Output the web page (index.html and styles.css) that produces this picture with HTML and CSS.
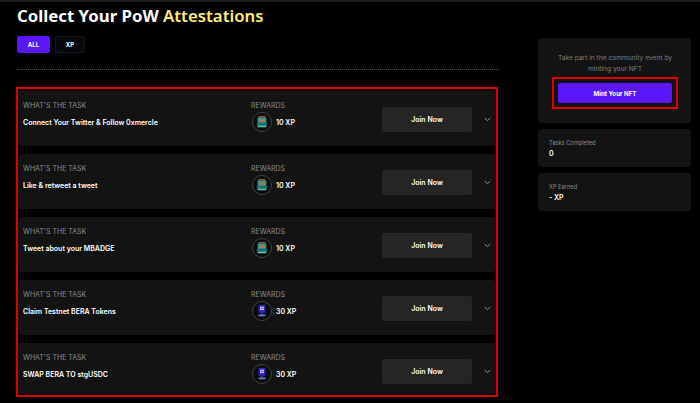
FILE: index.html
```html
<!DOCTYPE html>
<html lang="en">
<head>
    <meta charset="UTF-8">
    <meta name="viewport" content="width=device-width, initial-scale=1.0">
    <title>Collect Your PoW Attestations</title>
    <link rel="stylesheet" href="styles.css">
</head>
<body>
    <svg class="icon-defs" width="0" height="0">
        <defs>
            <symbol id="badge-green" viewBox="0 0 16 16">
                <rect x="4" y="1" width="8" height="2" fill="#8a5a44"/>
                <rect x="3" y="3" width="10" height="6" fill="#2b9c98"/>
                <rect x="5" y="5" width="6" height="3" fill="#c0703f"/>
                <rect x="2" y="9" width="12" height="3" fill="#1d6d74"/>
                <rect x="3" y="12" width="10" height="2" fill="#58c8b4"/>
            </symbol>
            <symbol id="badge-blue" viewBox="0 0 16 16">
                <rect x="4" y="1" width="8" height="9" fill="#2226c4"/>
                <rect x="6" y="3" width="4" height="4" fill="#d8d8f0"/>
                <rect x="7" y="4" width="2" height="2" fill="#d83a5a"/>
                <rect x="7" y="10" width="2" height="2" fill="#3438d0"/>
                <rect x="4" y="12" width="8" height="2" fill="#6f7ad8"/>
            </symbol>
            <symbol id="chevron" viewBox="0 0 10 6">
                <path d="M1 1l4 3.5L9 1" fill="none" stroke="#a8a8a8" stroke-width="1.2"/>
            </symbol>
        </defs>
    </svg>

    <div class="page">
        <div class="left">
            <h1>Collect Your PoW <span class="accent">Attestations</span></h1>

            <div class="tabs">
                <button class="tab tab-active">ALL</button>
                <button class="tab">XP</button>
            </div>

            <div class="divider"></div>

            <!-- Task list -->
            <div class="tasks">
                <div class="task">
                    <div class="task-info">
                        <div class="label">WHAT'S THE TASK</div>
                        <div class="task-name">Connect Your Twitter &amp; Follow 0xmercle</div>
                    </div>
                    <div class="task-reward">
                        <div class="label">REWARDS</div>
                        <div class="reward-row">
                            <span class="badge"><svg width="14" height="14"><use href="#badge-green"/></svg></span>
                            <span class="xp">10 XP</span>
                        </div>
                    </div>
                    <button class="join-btn">Join Now</button>
                    <svg class="chevron" width="7" height="5"><use href="#chevron"/></svg>
                </div>
                <div class="task">
                    <div class="task-info">
                        <div class="label">WHAT'S THE TASK</div>
                        <div class="task-name">Like &amp; retweet a tweet</div>
                    </div>
                    <div class="task-reward">
                        <div class="label">REWARDS</div>
                        <div class="reward-row">
                            <span class="badge"><svg width="14" height="14"><use href="#badge-green"/></svg></span>
                            <span class="xp">10 XP</span>
                        </div>
                    </div>
                    <button class="join-btn">Join Now</button>
                    <svg class="chevron" width="7" height="5"><use href="#chevron"/></svg>
                </div>
                <div class="task">
                    <div class="task-info">
                        <div class="label">WHAT'S THE TASK</div>
                        <div class="task-name">Tweet about your MBADGE</div>
                    </div>
                    <div class="task-reward">
                        <div class="label">REWARDS</div>
                        <div class="reward-row">
                            <span class="badge"><svg width="14" height="14"><use href="#badge-green"/></svg></span>
                            <span class="xp">10 XP</span>
                        </div>
                    </div>
                    <button class="join-btn">Join Now</button>
                    <svg class="chevron" width="7" height="5"><use href="#chevron"/></svg>
                </div>
                <div class="task">
                    <div class="task-info">
                        <div class="label">WHAT'S THE TASK</div>
                        <div class="task-name">Claim Testnet BERA Tokens</div>
                    </div>
                    <div class="task-reward">
                        <div class="label">REWARDS</div>
                        <div class="reward-row">
                            <span class="badge"><svg width="14" height="14"><use href="#badge-blue"/></svg></span>
                            <span class="xp">30 XP</span>
                        </div>
                    </div>
                    <button class="join-btn">Join Now</button>
                    <svg class="chevron" width="7" height="5"><use href="#chevron"/></svg>
                </div>
                <div class="task">
                    <div class="task-info">
                        <div class="label">WHAT'S THE TASK</div>
                        <div class="task-name">SWAP BERA TO stgUSDC</div>
                    </div>
                    <div class="task-reward">
                        <div class="label">REWARDS</div>
                        <div class="reward-row">
                            <span class="badge"><svg width="14" height="14"><use href="#badge-blue"/></svg></span>
                            <span class="xp">30 XP</span>
                        </div>
                    </div>
                    <button class="join-btn">Join Now</button>
                    <svg class="chevron" width="7" height="5"><use href="#chevron"/></svg>
                </div>
            </div>
        </div>

        <!-- Sidebar -->
        <div class="side">
            <div class="card mint-card">
                <p>Take part in the community event by minting your NFT</p>
                <div class="mint-outline">
                    <button class="mint-btn">Mint Your NFT</button>
                </div>
            </div>
            <div class="card stat-card">
                <div class="stat-label">Tasks Completed</div>
                <div class="stat-value">0</div>
            </div>
            <div class="card stat-card">
                <div class="stat-label">XP Earned</div>
                <div class="stat-value">- XP</div>
            </div>
        </div>
    </div>
</body>
</html>
```

FILE: styles.css
```css
* {
    margin: 0;
    padding: 0;
    box-sizing: border-box;
}

html, body {
    height: 403px;
    overflow: hidden;
}

body {
    font-family: "Noto Sans", Arial, sans-serif;
    background-color: #000;
    color: #fff;
    border-top: 2px solid #1c1c1c;
}

.icon-defs {
    display: block;
    height: 0;
}

.page {
    display: flex;
    padding-left: 16px;
}

.left {
    width: 483px;
}

h1 {
    font-size: 16.8px;
    line-height: 28px;
    font-weight: 700;
    margin-left: 1px;
}

.accent {
    color: #fdeb7f;
    font-weight: 600;
}

.tabs {
    display: flex;
    gap: 5px;
    margin: 6px 0 0 1px;
}

.tab {
    height: 17px;
    width: 30px;
    font-family: Inter, Arial, sans-serif;
    font-size: 6px;
    font-weight: 700;
    color: #fff;
    background: #07070c;
    border: 1px solid #17171c;
    border-radius: 2px;
}

.tab-active {
    width: 33px;
    background: #5b16fb;
    border-color: #5b16fb;
}

.divider {
    border-top: 1px dotted #4a4a4a;
    margin: 16px 0 0 1px;
}

.tasks {
    display: flex;
    flex-direction: column;
    gap: 8px;
    margin-top: 17px;
    width: 482px;
    height: 310px;
    border: 2px solid #e00000;
    padding-top: 2px;
}

.task {
    display: flex;
    align-items: flex-start;
    flex: none;
    height: 55px;
    padding-left: 5px;
    background: #131313;
    border-radius: 3px;
}

.task:last-child {
    height: 51px;
}

.task-info {
    width: 228px;
    padding-top: 10px;
}

.task-reward {
    width: 131px;
    padding-top: 10px;
}

.label {
    font-family: Inter, Arial, sans-serif;
    font-size: 7px;
    line-height: 10px;
    color: #8a8a8a;
}

.task-name {
    font-family: Inter, Arial, sans-serif;
    font-size: 7px;
    font-weight: 600;
    line-height: 10px;
    margin-top: 7px;
}

.reward-row {
    display: flex;
    align-items: center;
    gap: 4px;
    margin-top: 1px;
    margin-left: 1px;
}

.badge {
    display: flex;
    align-items: center;
    justify-content: center;
    width: 20px;
    height: 20px;
    border: 1px solid #444;
    border-radius: 50%;
    background: #0c0c0c;
}

.xp {
    font-family: Inter, Arial, sans-serif;
    font-size: 7px;
    font-weight: 600;
}

.join-btn {
    width: 90px;
    height: 25px;
    background: #252525;
    color: #fff;
    border: none;
    border-radius: 2px;
    font-family: Inter, Arial, sans-serif;
    font-size: 7px;
    font-weight: 600;
    margin-top: 15.5px;
}

.chevron {
    margin: 26px 0 0 12px;
}

.side {
    width: 153px;
    margin-left: 39px;
    margin-top: 36px;
    display: flex;
    flex-direction: column;
    gap: 6px;
}

.card {
    background: #131313;
    border-radius: 3px;
}

.mint-card {
    height: 85px;
    padding: 15px 13px 0 14px;
    text-align: center;
}

.mint-card p {
    font-family: Inter, Arial, sans-serif;
    font-size: 6.65px;
    line-height: 10.5px;
    color: #7d7d7d;
}

.mint-outline {
    border: 2px solid #e00000;
    padding: 4px;
    margin-top: 3px;
    height: 32px;
}

.mint-btn {
    display: block;
    width: 100%;
    height: 20px;
    background: #5b16fb;
    color: #fff;
    border: none;
    border-radius: 2px;
    font-family: Inter, Arial, sans-serif;
    font-size: 6.2px;
    font-weight: 700;
}

.stat-card {
    height: 38px;
    padding: 9px 11px;
}

.stat-label {
    font-family: Inter, Arial, sans-serif;
    font-size: 5.7px;
    line-height: 10px;
    color: #8a8a8a;
}

.stat-value {
    font-family: Inter, Arial, sans-serif;
    font-size: 7px;
    line-height: 11px;
    font-weight: 600;
}
```
